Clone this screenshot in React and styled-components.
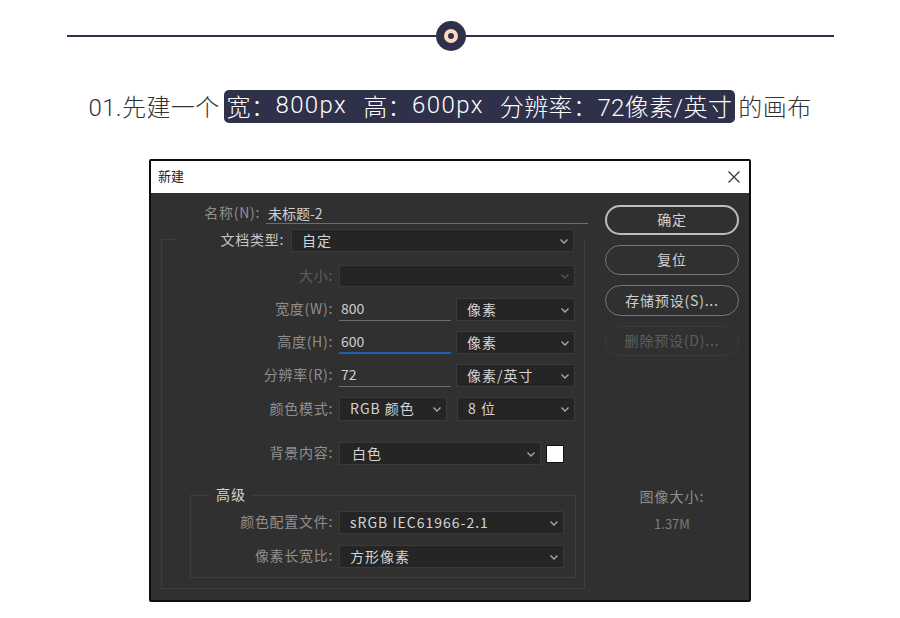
import React from "react";
import styled, { createGlobalStyle } from "styled-components";

const GlobalStyle = createGlobalStyle`
html, body {
  margin:0;
  padding:0;
  background:#fff;
}
`;

const CJK = `"Noto Sans CJK SC", "Noto Sans", sans-serif`;
const COLON = "\uFF1A";

const Page = styled.div`
width:900px;
height:618px;
overflow:hidden;
padding-top:21px;
box-sizing:border-box;
font-family:${CJK};
`;

const TopRule = styled.div`
display:flex;
align-items:center;
width:767px;
height:30px;
margin-left:67px;
`;

const RuleLine = styled.div`
flex:1;
height:2px;
background:#2e3149;
`;

const RuleDot = styled.div`
width:30px;
height:30px;
border-radius:50%;
background:#2e3149;
display:flex;
align-items:center;
justify-content:center;
`;

const RuleRing = styled.div`
width:14px;
height:14px;
border-radius:50%;
box-sizing:border-box;
border:4px solid #fbd9bf;
`;

const Heading = styled.div`
display:flex;
justify-content:center;
align-items:center;
height:33px;
margin-top:39px;
font-family:Roboto, ${CJK};
font-size:24px;
font-weight:300;
letter-spacing:0.4px;
color:#333;
white-space:nowrap;
`;

const Pill = styled.span`
display:flex;
align-items:center;
height:33px;
margin:0 3px 0 4px;
padding:0 3px 3px 3px;
box-sizing:border-box;
border-radius:5px;
background:#2e3149;
color:#fff;
`;

const HeadingText = styled.span`
padding-bottom:3px;
`;

const Num = styled.span`
letter-spacing:1.4px;
`;

const Spacer = styled.span`
width:16px;
`;

const Dialog = styled.div`
width:602px;
height:443px;
margin:36px 0 0 149px;
box-sizing:border-box;
border:2px solid #0e0e0e;
border-radius:2px;
background:#303030;
display:flex;
flex-direction:column;
`;

const TitleBar = styled.div`
height:32px;
flex:none;
background:#fff;
display:flex;
align-items:center;
justify-content:space-between;
padding:0 8px 0 7px;
font-size:13px;
color:#222;
`;

const TitleText = styled.span`
padding-bottom:4px;
`;

const DialogBody = styled.div`
flex:1;
display:flex;
padding-left:10px;
`;

const LeftCol = styled.div`
width:424px;
padding-top:12px;
`;

const NameRow = styled.div`
display:flex;
align-items:flex-end;
height:19px;
`;

const Frame = styled.div`
position:relative;
margin-top:5px;
height:360px;
box-sizing:border-box;
&::before {
  content:"";
  position:absolute;
  top:10px;
  left:0;
  right:0;
  bottom:0;
  border:1px solid #3e3e3e;
  border-top:none;
}
&::after {
  content:"";
  position:absolute;
  top:10px;
  left:0;
  width:16px;
  height:1px;
  background:#3e3e3e;
}
`;

const Row = styled.div`
position:relative;
z-index:1;
display:flex;
align-items:center;
height:${(p) => p.$h || 23}px;
margin-top:${(p) => p.$mt || 0}px;
`;

const Label = styled.div`
width:${(p) => p.$w}px;
flex:none;
text-align:right;
margin-right:${(p) => p.$gap || 6}px;
padding-bottom:${(p) => p.$pb || 3}px;
font-size:14px;
line-height:20px;
letter-spacing:0.7px;
white-space:nowrap;
color:${(p) => (p.$dim ? "#5e5e5e" : p.$bright ? "#c6c6c6" : "#8f8f8f")};
`;

const Select = styled.div`
width:${(p) => p.$w}px;
height:100%;
margin-left:${(p) => p.$ml || 0}px;
flex:none;
box-sizing:border-box;
border:1px solid #3a3a3a;
background:#252525;
display:flex;
align-items:center;
justify-content:space-between;
padding:0 3px 0 ${(p) => p.$pl || 10}px;
font-size:14px;
letter-spacing:1px;
color:#d4d4d4;
white-space:nowrap;
`;

const SelectText = styled.span`
padding-bottom:2px;
`;

const Field = styled.div`
width:${(p) => p.$w}px;
height:100%;
flex:none;
box-sizing:border-box;
border-bottom:${(p) => (p.$active ? "2px solid #1f5fb0" : "1px solid #6e6e6e")};
padding-left:2px;
font-size:14px;
line-height:${(p) => p.$lh || 20}px;
color:#cfcfcf;
`;

const Swatch = styled.div`
width:18px;
height:18px;
margin-left:5px;
box-sizing:border-box;
background:#fff;
border:1px solid #111;
`;

const GroupBox = styled.div`
position:relative;
z-index:1;
width:386px;
height:83px;
margin:30px 0 0 29px;
box-sizing:border-box;
border:1px solid #3e3e3e;
padding-top:15px;
`;

const Legend = styled.div`
position:absolute;
top:-12px;
left:19px;
padding:0 6px;
background:#303030;
font-size:14px;
line-height:20px;
letter-spacing:1px;
color:#d4d4d4;
`;

const RightCol = styled.div`
width:134px;
margin-left:20px;
padding-top:12px;
display:flex;
flex-direction:column;
`;

const Button = styled.div`
height:${(p) => p.$h || 31}px;
margin-bottom:${(p) => p.$mb || 9}px;
padding-bottom:2px;
box-sizing:border-box;
border-radius:16px;
border:${(p) => (p.$primary ? "2px solid #bdbdbd" : p.$off ? "1px solid #3a3a3a" : "1px solid #777")};
display:flex;
align-items:center;
justify-content:center;
font-size:14px;
letter-spacing:0.8px;
white-space:nowrap;
color:${(p) => (p.$off ? "#5e5e5e" : "#d0d0d0")};
`;

const SizeInfo = styled.div`
margin-top:121px;
text-align:center;
font-size:14px;
letter-spacing:1px;
color:#8f8f8f;
`;

const SizeValue = styled.div`
margin-top:8px;
font-size:13px;
letter-spacing:0;
color:#7c7c7c;
`;

function Chevron({ dim }) {
  return (
    <svg width="12" height="12" viewBox="0 0 12 12" fill="none" stroke={dim ? "#555" : "#a8a8a8"} strokeWidth="1.4">
      <path d="M2.5 4.5 L6 8 L9.5 4.5" />
    </svg>
  );
}

function App() {
  return (
    <Page>
      <GlobalStyle />
      <TopRule>
        <RuleLine />
        <RuleDot><RuleRing /></RuleDot>
        <RuleLine />
      </TopRule>
      <Heading>
        <HeadingText>01.先建一个</HeadingText>
        <Pill>
          宽{COLON}<Num>800px</Num>
          <Spacer />
          高{COLON}<Num>600px</Num>
          <Spacer />
          分辨率{COLON}72像素/英寸
        </Pill>
        <HeadingText>的画布</HeadingText>
      </Heading>
      <Dialog>
        <TitleBar>
          <TitleText>新建</TitleText>
          <svg width="14" height="14" viewBox="0 0 14 14" fill="none" stroke="#333" strokeWidth="1.2">
            <path d="M1.5 1.5 L12.5 12.5 M12.5 1.5 L1.5 12.5" />
          </svg>
        </TitleBar>
        <DialogBody>
          <LeftCol>
            <NameRow>
              <Label $w={99} $pb={2}>名称(N):</Label>
              <Field $w={322} $lh={16}>未标题-2</Field>
            </NameRow>
            <Frame>
              <Row>
                <Label $w={123} $gap={7} $bright>文档类型:</Label>
                <Select $w={283}><SelectText>自定</SelectText><Chevron /></Select>
              </Row>
              <Row $mt={13} $h={22}>
                <Label $w={172} $dim>大小:</Label>
                <Select $w={236}><span /><Chevron dim /></Select>
              </Row>
              <Row $mt={11}>
                <Label $w={172}>宽度(W):</Label>
                <Field $w={112}>800</Field>
                <Select $w={119} $ml={5}><SelectText>像素</SelectText><Chevron /></Select>
              </Row>
              <Row $mt={10}>
                <Label $w={172}>高度(H):</Label>
                <Field $w={112} $active>600</Field>
                <Select $w={119} $ml={5}><SelectText>像素</SelectText><Chevron /></Select>
              </Row>
              <Row $mt={10}>
                <Label $w={172}>分辨率(R):</Label>
                <Field $w={112}>72</Field>
                <Select $w={119} $ml={5}><SelectText>像素/英寸</SelectText><Chevron /></Select>
              </Row>
              <Row $mt={10} $h={24}>
                <Label $w={172}>颜色模式:</Label>
                <Select $w={108}><SelectText>RGB 颜色</SelectText><Chevron /></Select>
                <Select $w={118} $ml={10}><SelectText>8 位</SelectText><Chevron /></Select>
              </Row>
              <Row $mt={21}>
                <Label $w={172}>背景内容:</Label>
                <Select $w={202} $pl={12}><SelectText>白色</SelectText><Chevron /></Select>
                <Swatch />
              </Row>
              <GroupBox>
                <Legend>高级</Legend>
                <Row>
                  <Label $w={142}>颜色配置文件:</Label>
                  <Select $w={225}><SelectText>sRGB IEC61966-2.1</SelectText><Chevron /></Select>
                </Row>
                <Row $mt={11}>
                  <Label $w={142}>像素长宽比:</Label>
                  <Select $w={225}><SelectText>方形像素</SelectText><Chevron /></Select>
                </Row>
              </GroupBox>
            </Frame>
          </LeftCol>
          <RightCol>
            <Button $primary $h={30} $mb={10}>确定</Button>
            <Button $h={30} $mb={10}>复位</Button>
            <Button $mb={10}>存储预设(S)...</Button>
            <Button $off $h={30}>删除预设(D)...</Button>
            <SizeInfo>
              图像大小:
              <SizeValue>1.37M</SizeValue>
            </SizeInfo>
          </RightCol>
        </DialogBody>
      </Dialog>
    </Page>
  );
}

export default App;
